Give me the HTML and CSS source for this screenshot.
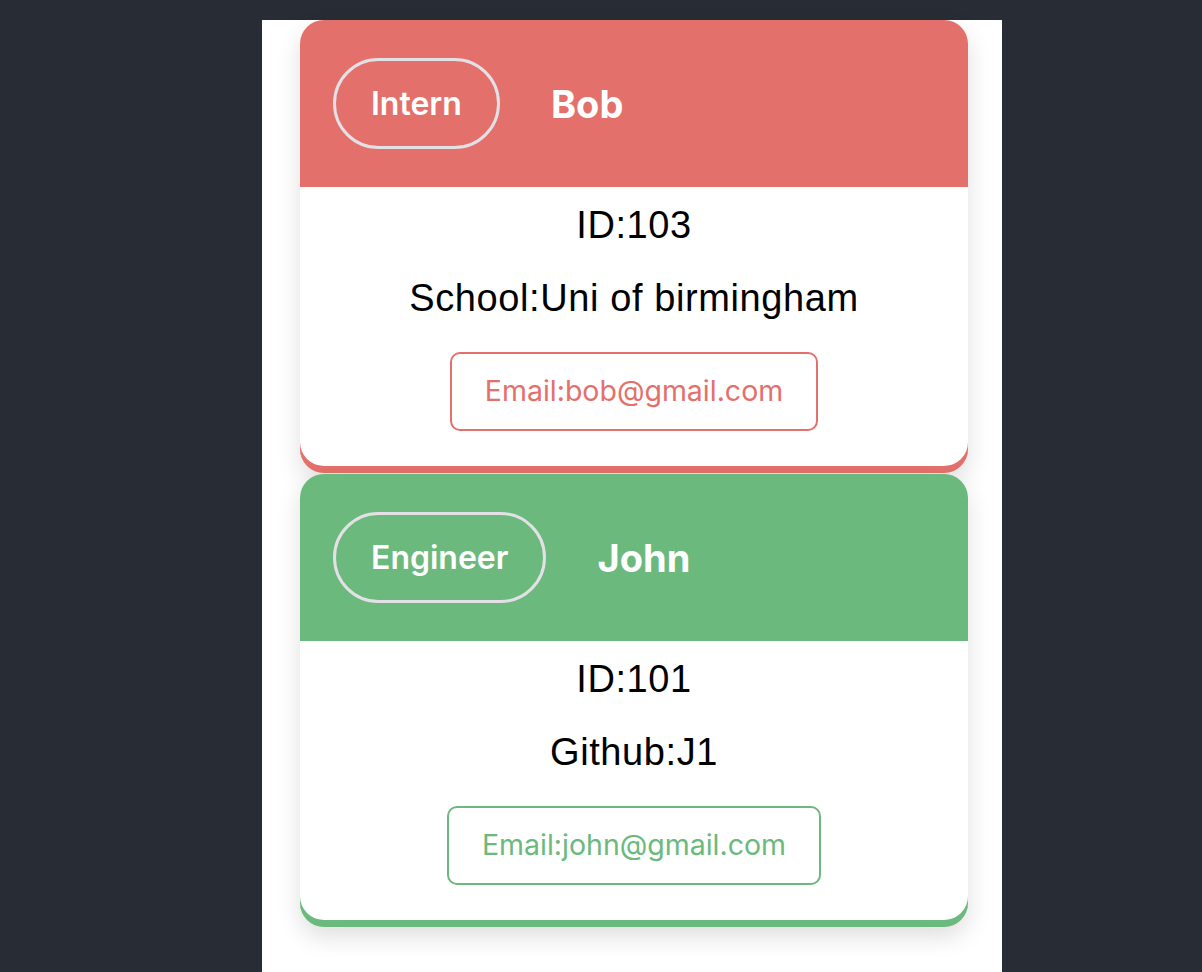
FILE: index.html
```html
<!DOCTYPE html>
<html>
<head>
<meta charset="utf-8">
<link rel="stylesheet" href="styles.css">
</head>
<body>
<div class="panel">
  <div class="card card-red">
    <div class="card-head">
      <span class="role">Intern</span>
      <span class="name">Bob</span>
    </div>
    <div class="card-body">
      <p class="line line-id">ID:103</p>
      <p class="line line-extra">School:Uni of birmingham</p>
      <div class="email">Email:bob@gmail.com</div>
    </div>
  </div>
  <div class="card card-green">
    <div class="card-head">
      <span class="role">Engineer</span>
      <span class="name">John</span>
    </div>
    <div class="card-body">
      <p class="line line-id">ID:101</p>
      <p class="line line-extra">Github:J1</p>
      <div class="email">Email:john@gmail.com</div>
    </div>
  </div>
</div>
</body>
</html>
```
FILE: styles.css
```css
html, body {
  margin: 0;
  padding: 0;
  background: #282c34;
  height: 100%;
}
body {
  overflow: hidden;
}
.panel {
  width: 740px;
  margin-left: 262px;
  margin-top: 20px;
  background: #ffffff;
  min-height: 952px;
  box-sizing: border-box;
  padding: 0 34px 0 38px;
}
.card {
  width: 668px;
  border-radius: 24px;
  overflow: hidden;
  margin-bottom: 1px;
  box-shadow: 0 10px 24px rgba(0, 0, 0, 0.13);
}
.card-red { background: #e4706b; border-bottom: 7px solid #e4706b; }
.card-green { background: #6bb97d; border-bottom: 7px solid #6bb97d; }
.card-head {
  height: 167px;
  display: flex;
  align-items: center;
  padding-left: 33px;
  gap: 51px;
  box-sizing: border-box;
}
.role {
  font-family: Inter, "Noto Sans", sans-serif;
  font-weight: 600;
  font-size: 32px;
  line-height: 37px;
  color: #ffffff;
  border: 3px solid #e3e0e6;
  border-radius: 48px;
  padding: 24px 35px;
}
.name {
  font-family: Inter, "Noto Sans", sans-serif;
  font-weight: 700;
  font-size: 38px;
  color: #ffffff;
}
.card-body {
  background: #ffffff;
  border-radius: 0 0 24px 24px;
  text-align: center;
  padding: 16px 0 35px;
}
.line {
  margin: 0;
  font-family: "Liberation Sans", Arial, sans-serif;
  font-size: 38px;
  line-height: 44px;
  letter-spacing: 0.6px;
  color: #000000;
}
.line-id { margin-bottom: 29px; }
.line-extra { margin-bottom: 32px; }
.email {
  display: inline-block;
  font-family: Inter, "Noto Sans", sans-serif;
  font-size: 28.5px;
  line-height: 34px;
  padding: 20px 33px 21px;
  border: 2px solid currentColor;
  border-radius: 10px;
}
.card-red .email { color: #e4706b; }
.card-green .email { color: #6bb97d; }
```
